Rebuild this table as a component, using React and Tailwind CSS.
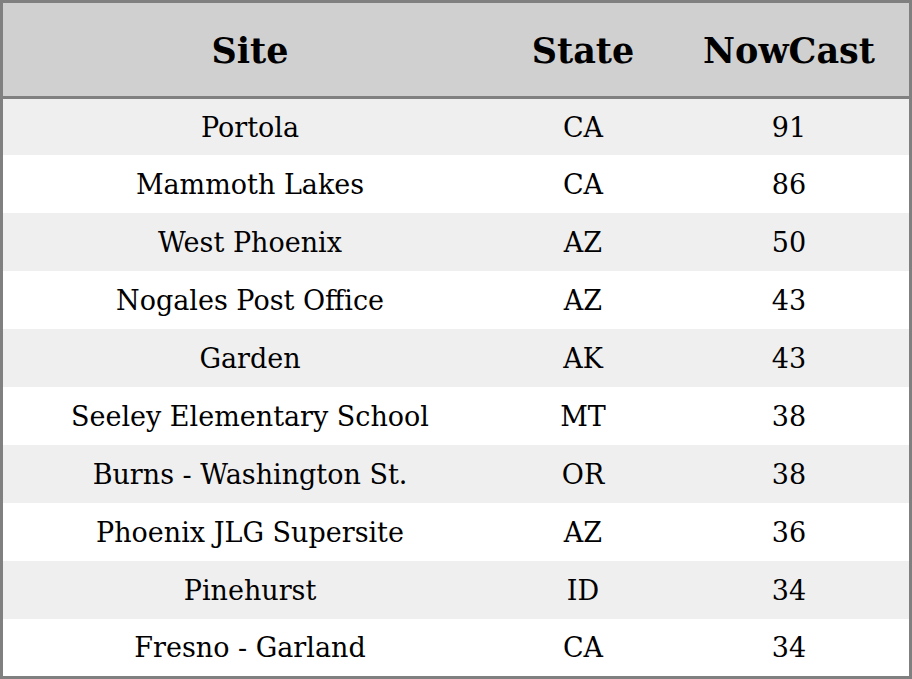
import React from 'react';

const rows = [
  ['Portola', 'CA', '91'],
  ['Mammoth Lakes', 'CA', '86'],
  ['West Phoenix', 'AZ', '50'],
  ['Nogales Post Office', 'AZ', '43'],
  ['Garden', 'AK', '43'],
  ['Seeley Elementary School', 'MT', '38'],
  ['Burns - Washington St.', 'OR', '38'],
  ['Phoenix JLG Supersite', 'AZ', '36'],
  ['Pinehurst', 'ID', '34'],
  ['Fresno - Garland', 'CA', '34'],
];

const App = () => {
  return (
    <div className="w-[912px] h-[679px] border-[3px] border-[#808080] bg-white text-black flex flex-col font-['DejaVu_Serif',serif]">
      {/* Header */}
      <div className="h-[96px] shrink-0 pt-[3px] bg-[#d0d0d0] border-b-[3px] border-[#808080] flex items-center text-[35px] font-bold">
        <div className="w-[494px] text-center">Site</div>
        <div className="w-[172px] text-center">State</div>
        <div className="flex-1 text-center">NowCast</div>
      </div>

      {/* Rows: first is clipped a little at the top, last at the bottom */}
      <div className="flex-1 flex flex-col overflow-hidden">
        {rows.map(([site, state, nowcast], i) => (
          <div
            key={site}
            className={`shrink-0 flex items-center pt-[2px] text-[27px] ${i === 0 ? 'h-[56px]' : i === rows.length - 1 ? 'h-[57px]' : 'h-[58px]'} ${i % 2 === 0 ? 'bg-[#efefef]' : 'bg-white'}`}
          >
            <div className="w-[494px] text-center">{site}</div>
            <div className="w-[172px] text-center">{state}</div>
            <div className="flex-1 text-center">{nowcast}</div>
          </div>
        ))}
      </div>
    </div>
  );
};

export default App;
